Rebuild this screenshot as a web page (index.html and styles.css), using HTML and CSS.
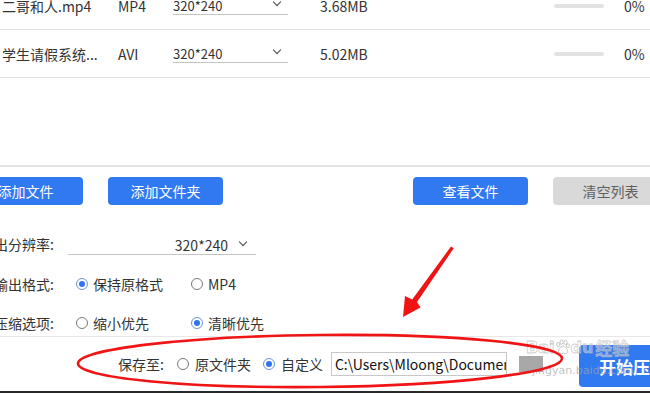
FILE: index.html
```html
<!DOCTYPE html>
<html lang="zh">
<head>
<meta charset="utf-8">
<link rel="stylesheet" href="styles.css">
</head>
<body>
<div class="page">
  <div class="list">
    <div class="row">
      <div class="c-name">二哥和人.mp4</div>
      <div class="c-type">MP4</div>
      <div class="c-res"><span>320*240</span><i class="chev"></i></div>
      <div class="c-size">3.68MB</div>
      <div class="c-prog"><div class="bar"></div></div>
      <div class="c-pct">0%</div>
    </div>
    <div class="row">
      <div class="c-name">学生请假系统...</div>
      <div class="c-type">AVI</div>
      <div class="c-res"><span>320*240</span><i class="chev"></i></div>
      <div class="c-size">5.02MB</div>
      <div class="c-prog"><div class="bar"></div></div>
      <div class="c-pct">0%</div>
    </div>
  </div>

  <div class="toolbar">
    <button class="btn btn-blue b1">添加文件</button>
    <button class="btn btn-blue b2">添加文件夹</button>
    <button class="btn btn-blue b3">查看文件</button>
    <button class="btn btn-gray b4">清空列表</button>
  </div>

  <div class="options">
    <div class="opt-row r1">
      <div class="opt-label">输出分辨率:</div>
      <div class="res-select"><span>320*240</span><i class="chev"></i></div>
    </div>
    <div class="opt-row r2">
      <div class="opt-label">输出格式:</div>
      <div class="radio-item w1"><i class="radio on"></i><span>保持原格式</span></div>
      <div class="radio-item"><i class="radio"></i><span>MP4</span></div>
    </div>
    <div class="opt-row r3">
      <div class="opt-label">压缩选项:</div>
      <div class="radio-item w1"><i class="radio"></i><span>缩小优先</span></div>
      <div class="radio-item"><i class="radio on"></i><span>清晰优先</span></div>
    </div>
  </div>

  <div class="savebar">
    <span class="save-label">保存至:</span>
    <i class="radio s1"></i><span class="s-text">原文件夹</span>
    <i class="radio on s2"></i><span class="s-text">自定义</span>
    <div class="path">C:\Users\Mloong\Documents</div>
    <div class="folder"></div>
    <button class="start">开始压缩</button>
  </div>

  <div class="watermark">
    <div class="wm1">Bai<svg class="paw" width="15" height="16" viewBox="0 0 18 18"><g fill="rgba(255,255,255,0.6)" stroke="rgba(185,185,185,0.8)" stroke-width="1.2"><ellipse cx="4" cy="6" rx="2" ry="2.6"/><ellipse cx="8" cy="3" rx="2" ry="2.6"/><ellipse cx="12.5" cy="3.5" rx="2" ry="2.6"/><ellipse cx="15.5" cy="7.5" rx="1.8" ry="2.4"/><path d="M9.5 8c-3 0-6 4.5-5 7s4 1.5 5.5 1.5 4 1.5 5-1-2.5-7.5-5.5-7.5z"/></g></svg>du<span class="wm-cn">经验</span></div>
    <div class="wm2">jingyan.baidu.com</div>
  </div>

  <svg class="annot" width="650" height="394" viewBox="0 0 650 394">
    <ellipse cx="320" cy="361" rx="242" ry="26" fill="none" stroke="#f01414" stroke-width="2.6" transform="rotate(-0.6 320 361)"/>
    <polygon points="451,246.5 453.8,248.2 417,302 420.5,307.5 403,317 405,296 412.2,299.5" fill="#f01414"/>
  </svg>
</div>
</body>
</html>
```

FILE: styles.css
```css
* { box-sizing: border-box; }
html, body { margin: 0; padding: 0; background: #fff; }
body {
  width: 650px;
  height: 394px;
  overflow: hidden;
  font-family: "Noto Sans CJK SC", "Noto Sans", sans-serif;
  font-size: 14px;
  color: #333;
}
.page {
  position: relative;
  width: 650px;
  height: 394px;
  overflow: hidden;
}

/* file list */
.list {
  margin-top: -18px;
  height: 183px;
  border-bottom: 2px solid #e4e4e4;
  box-sizing: content-box;
}
.row {
  display: flex;
  align-items: center;
  height: 48px;
  border-bottom: 1px solid #e2e2e2;
  white-space: nowrap;
}
.c-name { width: 118px; padding-left: 2px; }
.c-type { width: 55px; }
.c-res {
  width: 115px;
  height: 18px;
  display: flex;
  align-items: center;
  justify-content: space-between;
  border-bottom: 1px solid #c4c4c4;
  font-size: 13px;
  padding-right: 8px;
}
.chev {
  display: inline-block;
  width: 6px;
  height: 6px;
  border-right: 1.3px solid #444;
  border-bottom: 1.3px solid #444;
  transform: rotate(45deg);
  margin-top: -6px;
}
.c-size { margin-left: 32px; width: 234px; }
.c-prog { width: 50px; display: flex; align-items: center; }
.bar { width: 50px; height: 4px; border-radius: 2px; background: #e3e3e3; }
.c-pct { margin-left: 20px; }

/* toolbar */
.toolbar {
  display: flex;
  padding-top: 10px;
  height: 38px;
}
.btn {
  width: 115px;
  height: 28px;
  border: none;
  border-radius: 4px;
  font-family: inherit;
  font-size: 14px;
  padding: 0;
  flex-shrink: 0;
}
.btn-blue { background: #3179f0; color: #fff; }
.btn-gray { background: #d9d9d9; color: #5f5f5f; }
.b1 { margin-left: -32px; }
.b2 { margin-left: 25px; }
.b3 { margin-left: 190px; }
.b4 { margin-left: 25px; }

/* options */
.options {
  height: 132px;
  padding-top: 19px;
  border-bottom: 1px solid #e8e8e8;
}
.opt-row {
  display: flex;
  align-items: center;
  height: 39px;
  white-space: nowrap;
}
.r1 { height: 40px; }
.opt-label {
  width: 80px;
  margin-left: -26px;
  margin-right: 6px;
  text-align: right;
  flex-shrink: 0;
}
.res-select {
  margin-left: 8px;
  width: 188px;
  height: 22px;
  display: flex;
  align-items: center;
  justify-content: flex-end;
  gap: 12px;
  padding-right: 10px;
  border-bottom: 1px solid #c4c4c4;
  font-size: 14px;
  padding-top: 2px;
}
.radio-item {
  display: flex;
  align-items: center;
  gap: 5px;
}
.radio-item.w1 { width: 115px; margin-left: 16px; }
.radio {
  display: inline-block;
  width: 12px;
  height: 12px;
  border-radius: 50%;
  border: 1px solid #777;
  background: #fff;
  flex-shrink: 0;
  position: relative;
}
.radio.on { border-color: #6a93d6; }
.radio.on::after {
  content: "";
  position: absolute;
  left: 2px; top: 2px;
  width: 6px; height: 6px;
  border-radius: 50%;
  background: #2f74ee;
}

/* save bar */
.savebar {
  display: flex;
  align-items: center;
  height: 56px;
  padding-left: 118px;
  border-bottom: 2px solid #2a2a2a;
  white-space: nowrap;
}
.save-label { margin-right: 13px; }
.s-text { margin-left: 6px; }
.s2 { margin-left: 12px; }
.path {
  margin-left: 8px;
  width: 176px;
  height: 24px;
  line-height: 22px;
  border: 1px solid #c8c8c8;
  padding-left: 3px;
  overflow: hidden;
  color: #111;
  flex-shrink: 0;
}
.folder {
  margin-left: 12px;
  width: 24px;
  height: 16px;
  background: #a8a8a8;
  flex-shrink: 0;
}
.start {
  margin-left: 36px;
  width: 100px;
  height: 42px;
  border: none;
  border-radius: 4px;
  background: #3179f0;
  color: #fff;
  font-family: inherit;
  font-size: 17px;
  font-weight: bold;
  text-align: left;
  padding-left: 20px;
  flex-shrink: 0;
  margin-top: 4px;
}

/* watermark */
.watermark {
  position: absolute;
  left: 526px;
  top: 338px;
  pointer-events: none;
  font-family: "DejaVu Sans", sans-serif;
  white-space: nowrap;
}
.wm1 {
  font-size: 16px;
  font-weight: bold;
  color: rgba(255,255,255,0.4);
  -webkit-text-stroke: 0.8px rgba(185,185,185,0.75);
  display: flex;
  align-items: center;
  line-height: 20px;
}
.wm-cn { font-family: "Noto Sans CJK SC", sans-serif; margin-left: 2px; font-size: 17px; }
.paw { margin: 0 0 3px 1px; }
.wm2 {
  font-size: 11px;
  color: rgba(165,165,165,0.7);
  margin-left: 6px;
  margin-top: 6px;
}

/* annotation overlay */
.annot {
  position: absolute;
  left: 0;
  top: 0;
  pointer-events: none;
}
```
